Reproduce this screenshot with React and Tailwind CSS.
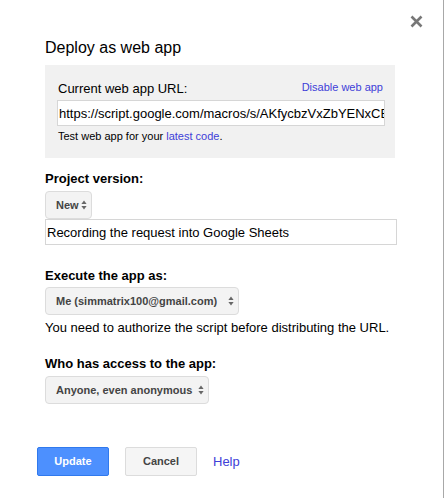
import React from "react";

function Arrows() {
  return (
    <svg width="6" height="10" viewBox="0 0 6 10" className="shrink-0">
      <path d="M3 0.5 L5.6 4 L0.4 4 Z" fill="#666" />
      <path d="M3 9.5 L5.6 6 L0.4 6 Z" fill="#666" />
    </svg>
  );
}

function Select({ label, w }) {
  return (
    <div
      className={`flex items-center justify-between h-[28px] ${w} pl-[10px] pr-[4px] rounded-[4px] border border-[#dcdcdc] bg-[#f3f3f3] text-[11px] leading-[13px] font-bold text-[#444] whitespace-nowrap`}
    >
      <span>{label}</span>
      <Arrows />
    </div>
  );
}

export default function App() {
  return (
    <div className="relative w-[444px] h-[498px] bg-white border-r border-[#a8a8a8] pl-[45px] pt-[39px] text-black font-['Liberation_Sans',Arial,sans-serif]">
      <div className="absolute top-[15px] left-[410px]">
        <svg width="13" height="13" viewBox="0 0 13 13">
          <path d="M1.5 1.5 L11.5 11.5 M11.5 1.5 L1.5 11.5" stroke="#777" strokeWidth="2.6" strokeLinecap="butt" />
        </svg>
      </div>

      <div className="text-[16px] leading-[18px]">Deploy as web app</div>

      <div className="mt-[8px] w-[350px] bg-[#f1f1f1] pt-[16px] pb-[15px] pl-[12px] pr-[10px]">
        <div className="flex items-start justify-between pl-[1px] pr-[2px]">
          <span className="text-[13px] leading-[15px]">Current web app URL:</span>
          <span className="text-[11px] leading-[13px] text-[#4040d8]">Disable web app</span>
        </div>
        <div className="mt-[4px] h-[26px] w-[328px] bg-white border border-[#d6d6d6] pl-[1px] overflow-hidden whitespace-nowrap flex items-center text-[13px] leading-[15px]">
          https://script.google.com/macros/s/AKfycbzVxZbYENxCBqLmT4k/exec
        </div>
        <div className="mt-[4px] pl-[1px] text-[11px] leading-[13px]">
          Test web app for your <span className="text-[#4040d8]">latest code</span>.
        </div>
      </div>

      <div className="mt-[13px] text-[13px] leading-[15px] font-bold">Project version:</div>
      <div className="mt-[5px]">
        <Select label="New" w="w-[47px]" />
      </div>
      <div className="h-[26px] w-[352px] border border-[#d6d6d6] pl-[1px] flex items-center text-[13px] leading-[15px]">
        Recording the request into Google Sheets
      </div>

      <div className="mt-[23px] text-[13px] leading-[15px] font-bold">Execute the app as:</div>
      <div className="mt-[4px]">
        <Select label="Me (simmatrix100@gmail.com)" w="w-[194px]" />
      </div>
      <div className="mt-[5px] text-[13px] leading-[15px]">
        You need to authorize the script before distributing the URL.
      </div>

      <div className="mt-[21px] text-[13px] leading-[15px] font-bold">Who has access to the app:</div>
      <div className="mt-[5px]">
        <Select label="Anyone, even anonymous" w="w-[164px]" />
      </div>

      <div className="mt-[43px] -ml-[8px] flex items-center gap-[16px]">
        <div className="w-[72px] h-[29px] flex items-center justify-center rounded-[2px] bg-[#4d90fe] border border-[#3079ed] text-white text-[11px] font-bold">
          Update
        </div>
        <div className="w-[72px] h-[29px] flex items-center justify-center rounded-[2px] bg-[#f5f5f5] border border-[#dcdcdc] text-[#444] text-[11px] font-bold">
          Cancel
        </div>
        <span className="text-[13px] text-[#4040d8]">Help</span>
      </div>
    </div>
  );
}
